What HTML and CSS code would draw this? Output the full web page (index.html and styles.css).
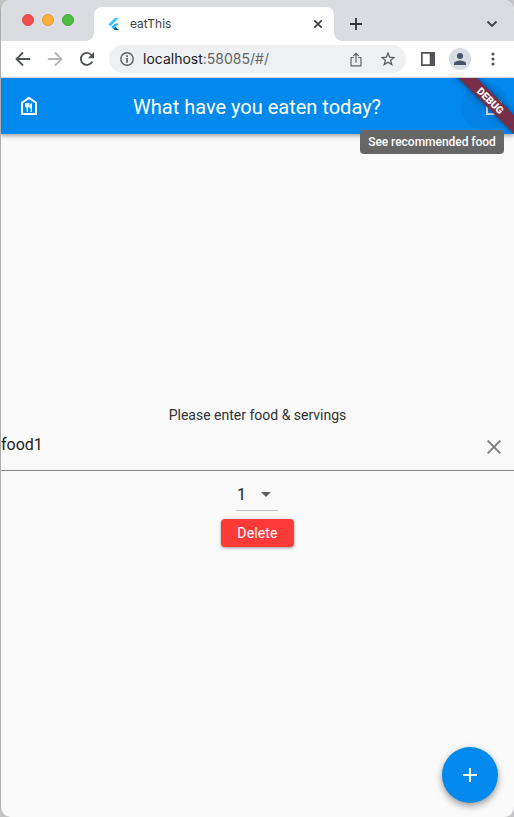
FILE: index.html
```html
<!DOCTYPE html>
<html lang="en">
<head>
<meta charset="utf-8">
<title>eatThis</title>
<link rel="stylesheet" href="styles.css">
</head>
<body>
<div class="window">
  <header class="tabstrip">
    <div class="lights"><i class="light red"></i><i class="light amber"></i><i class="light green"></i></div>
    <div class="tab">
      <svg class="favicon" width="12" height="14" viewBox="0 0 12 14"><path d="M6.8 1h4L2.5 9.2.5 7.2z" fill="#40c4ff"/><path d="M7 6.500h4L7.500 10 5.300 8.200z" fill="#29b6f6"/><path d="M3.200 10.100l2.100-2 2.200 2L5.300 12z" fill="#29b6f6"/><path d="M5.300 12l2.200-1.900L11 13H7z" fill="#01579b"/></svg>
      <span class="tab-title">eatThis</span>
      <svg class="tab-close" width="10" height="10" viewBox="0 0 10 10"><path d="M1.300 1.300l7.400 7.400m0-7.400L1.300 8.700" stroke="#3c4043" stroke-width="1.700"/></svg>
    </div>
    <svg class="new-tab" width="12" height="12" viewBox="0 0 12 12"><path d="M6 0v12M0 6h12" stroke="#303336" stroke-width="1.800"/></svg>
    <svg class="chevron" width="12" height="8" viewBox="0 0 12 8"><path d="M1.500 1.500L6 6l4.500-4.500" fill="none" stroke="#3c4043" stroke-width="1.800"/></svg>
  </header>
  <nav class="toolbar">
    <svg class="back" width="16" height="16" viewBox="0 0 16 16"><path d="M15.200 8H2M8 1.500L1.500 8 8 14.500" fill="none" stroke="#505458" stroke-width="1.800"/></svg>
    <svg class="forward" width="16" height="16" viewBox="0 0 16 16"><path d="M.8 8H14M8 1.500L14.500 8 8 14.500" fill="none" stroke="#b4b6b8" stroke-width="1.800"/></svg>
    <svg class="reload" width="16" height="16" viewBox="0 0 16 16"><path d="M13.300 10.500A6 6 0 1 1 12.500 4" fill="none" stroke="#505458" stroke-width="1.900"/><path d="M15 1v6.200H8.800z" fill="#505458"/></svg>
    <div class="omnibox">
      <svg class="info" width="14" height="14" viewBox="0 0 14 14"><circle cx="7" cy="7" r="6.200" fill="none" stroke="#5b5e62" stroke-width="1.400"/><path d="M7 3.300v1.700M7 6v4.700" stroke="#505458" stroke-width="1.600"/></svg>
      <span class="url">localhost<span class="port">:58085/#/</span></span>
      <svg class="share" width="12" height="15" viewBox="0 0 12 15"><path d="M4 5.500H1v8.300h10V5.500H8M6 10.500V1.500M3.300 4L6 1.300 8.700 4" fill="none" stroke="#606468" stroke-width="1.200"/></svg>
      <svg class="star" width="14" height="14" viewBox="0 0 14 14"><path d="M7 1l1.600 4.200 4.500.3-3.500 2.800 1.200 4.300L7 10.200l-3.800 2.400 1.200-4.300L.9 5.500l4.500-.3z" fill="none" stroke="#5b5e62" stroke-width="1.300"/></svg>
    </div>
    <svg class="panel" width="14" height="14" viewBox="0 0 14 14"><path d="M0 0h14v14H0zM1.700 1.800v10.400h7V1.800z" fill="#505458" fill-rule="evenodd"/></svg>
    <div class="avatar"><svg width="12" height="12" viewBox="0 0 12 12"><circle cx="6" cy="3" r="3" fill="#46536b"/><path d="M0 12v-1.500C0 8.500 4 7.500 6 7.500s6 1 6 3V12z" fill="#46536b"/></svg></div>
    <svg class="more" width="4" height="14" viewBox="0 0 4 14"><g fill="#505458"><circle cx="2" cy="2" r="1.600"/><circle cx="2" cy="7" r="1.600"/><circle cx="2" cy="12" r="1.600"/></g></svg>
  </nav>
  <main class="app">
    <header class="appbar">
      <svg class="house" width="18" height="20" viewBox="0 0 18 20"><path d="M2 18V6.700L9 2l7 4.700V18z" fill="none" stroke="#fff" stroke-width="2"/><path d="M5 7h4.500v3.500L8 11.700V16H6.700v-4.300L5 10.500zM9.500 9.500Q10 7 12 7v9h-1.300v-3.500H9.500z" fill="#e5f3fe"/></svg>
      <h1 class="title">What have you eaten today?</h1>
      <div class="halo"></div>
      <svg class="action" width="18" height="20" viewBox="0 0 18 20"><path d="M2 18V6.700L9 2l7 4.700V18z" fill="none" stroke="#d9ecfb" stroke-width="2"/></svg>
      <div class="debug">DEBUG</div>
    </header>
    <div class="tooltip">See recommended food</div>
    <section class="content">
      <p class="prompt">Please enter food &amp; servings</p>
      <div class="field"><span>food1</span><svg width="14" height="14" viewBox="0 0 14 14"><path d="M.6.6l12.800 12.800M13.400.6L.6 13.400" stroke="#7b7b7b" stroke-width="1.900"/></svg></div>
      <div class="select"><span>1</span><svg width="10" height="5" viewBox="0 0 10 5"><path d="M0 0h10L5 5z" fill="#616161"/></svg></div>
      <button class="delete">Delete</button>
    </section>
    <button class="fab" aria-label="Add"><svg width="14" height="14" viewBox="0 0 14 14"><path d="M7 0v14M0 7h14" stroke="#fff" stroke-width="2"/></svg></button>
  </main>
</div>
</body>
</html>
```
FILE: styles.css
```css
* { box-sizing: border-box; }
body { margin: 0; background: #c4c4c6; font-family: Roboto, sans-serif; }
svg { display: block; flex: none; }
.window { width: 514px; height: 817px; border-left: 1px solid #adadad; border-radius: 10px; overflow: hidden; background: #fafafa; }
.tabstrip { height: 41px; background: #dadce1; display: flex; align-items: flex-start; }
.lights { display: flex; gap: 8px; padding: 14px 0 0 21px; width: 93px; }
.light { width: 12px; height: 12px; border-radius: 50%; }
.red { background: #f14f4d; border: 1px solid #d94744; }
.amber { background: #fbb03b; border: 1px solid #dc9b35; }
.green { background: #4bc043; border: 1px solid #3ca637; }
.tab { position: relative; width: 240px; height: 34px; margin-top: 7px; border-radius: 8px 8px 0 0; background: #fff; display: flex; align-items: center; padding-left: 14px; }
.tab::before, .tab::after { content: ""; position: absolute; bottom: 0; width: 8px; height: 8px; }
.tab::before { left: -8px; background: radial-gradient(circle at 0 0, transparent 7.5px, #fff 8px); }
.tab::after { right: -8px; background: radial-gradient(circle at 100% 0, transparent 7.5px, #fff 8px); }
.tab-title { margin-left: 10px; font: 12px/16px Inter, sans-serif; color: #3c4043; }
.tab-close { margin-left: auto; margin-right: 11px; }
.new-tab { margin: 18px 0 0 16px; }
.chevron { margin: 20px 16px 0 auto; }
.toolbar { height: 37px; background: #fff; border-bottom: 1px solid #d8dadd; display: flex; align-items: center; padding: 0 19px 0 14px; }
.forward { margin-left: 16px; }
.reload { margin-left: 16px; }
.omnibox { width: 297px; height: 28px; margin-left: 14px; border-radius: 14px; background: #eff0f2; display: flex; align-items: center; padding: 0 11px; }
.url { margin-left: 9px; font: 14px/20px Inter, sans-serif; color: #202124; white-space: nowrap; }
.port { color: #5f6368; }
.share { margin-left: auto; }
.star { margin-left: 19px; }
.panel { margin-left: 15px; }
.avatar { width: 22px; height: 22px; margin-left: 14px; border-radius: 50%; background: #d8dce3; display: flex; align-items: center; justify-content: center; }
.more { margin-left: auto; }
.app { position: relative; height: 739px; }
.appbar { position: relative; height: 56px; background: #0289ee; display: flex; align-items: center; padding: 0 11px 0 19px; overflow: hidden; }
.app::before { content: ""; position: absolute; inset: 0 0 auto; height: 56px; box-shadow: 0 2px 4px rgba(0,0,0,.34); }
.title { margin: 2px auto 0 95px; font: 400 20px/24px Roboto, sans-serif; color: #fff; white-space: nowrap; }
.halo { position: absolute; right: 5px; top: 4px; width: 48px; height: 48px; border-radius: 50%; background: rgba(0,30,70,.06); }
.debug { position: absolute; left: 430px; top: 17px; width: 120px; height: 13px; transform: rotate(45deg); background: #772e48; box-shadow: 0 0 6px rgba(0,0,0,.5); color: #fff; text-align: center; text-indent: -2px; font: 900 10.2px/14px Roboto, sans-serif; }
.tooltip { position: absolute; left: 359px; top: 52px; width: 144px; height: 24px; border-radius: 4px; background: #666; color: #fff; text-align: center; font: 500 12px/24px Roboto, sans-serif; letter-spacing: -.03px; white-space: nowrap; }
.content { display: flex; flex-direction: column; align-items: center; padding-top: 272px; }
.prompt { margin: 0; font-size: 14px; line-height: 18px; color: #303030; }
.field { width: 100%; height: 47px; border-bottom: 1px solid #858585; display: flex; align-items: center; justify-content: space-between; padding-right: 13px; font-size: 16px; color: #212121; }
.field span { margin-top: -6px; }
.select { width: 42px; height: 40px; margin-right: 1px; border-bottom: 1px solid #bdbdbd; display: flex; align-items: center; gap: 15px; padding: 8px 0 0 1px; font-size: 16px; color: #212121; }
.delete { width: 73px; height: 28px; margin-top: 8px; padding: 0; border: 0; border-radius: 4px; background: #fc3b38; box-shadow: 0 1px 3px rgba(0,0,0,.4); color: #fff; font: 400 14px/28px Roboto, sans-serif; letter-spacing: .15px; }
.fab { position: absolute; right: 16px; bottom: 14px; width: 56px; height: 56px; padding: 0; border: 0; border-radius: 50%; background: #0289ee; display: grid; place-items: center; box-shadow: 0 3px 7px rgba(0,0,0,.4); }
```
